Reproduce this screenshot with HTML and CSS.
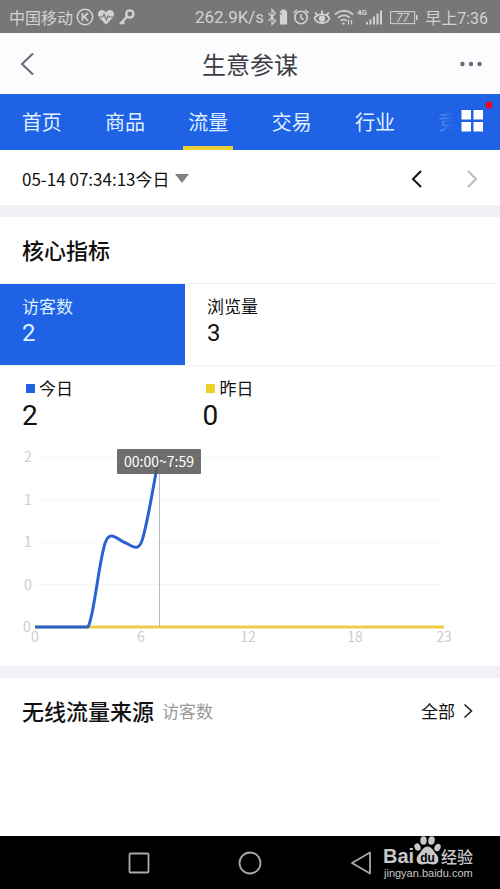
FILE: index.html
```html
<!DOCTYPE html>
<html lang="zh-CN">
<head>
  <meta charset="UTF-8">
  <meta name="viewport" content="width=device-width, initial-scale=1.0">
  <title>生意参谋</title>
  <link rel="stylesheet" href="styles.css">
</head>
<body>
  <!-- 状态栏 -->
  <div class="status">
    <div class="status_left">
      <span class="carrier">中国移动</span>
      <svg width="18" height="18" viewBox="0 0 18 18" fill="none" stroke="#d2d2d2">
        <circle cx="9" cy="9" r="7.7" stroke-width="1.5"/>
        <path d="M6.5 5v8M12 5L7 9.6M8.4 8.6L12.2 13" stroke-width="1.8"/>
      </svg>
      <svg class="heart" width="18" height="18" viewBox="0 0 18 18">
        <path d="M9 16.5L2.2 9.8C-.2 7 1 2.3 4.8 2.1C6.8 2 8.2 3 9 4.4C9.8 3 11.2 2 13.2 2.1C17 2.3 18.2 7 15.8 9.8z" fill="#d2d2d2"/>
        <path d="M1 9h4.5l1.6-2.8L9.3 12l1.8-4.2l1 1.2H17" fill="none" stroke="#777" stroke-width="1.2"/>
      </svg>
      <svg width="18" height="18" viewBox="0 0 18 18" fill="none" stroke="#d2d2d2">
        <circle cx="11.8" cy="6" r="3.6" stroke-width="2.4"/>
        <path d="M9.2 8.7L2 16M3.6 13.2l2.6 2.6" stroke-width="2.4"/>
      </svg>
    </div>
    <div class="status_right">
      <span class="speed">262.9K/s</span>
      <svg width="22" height="18" viewBox="0 0 22 18" fill="none" stroke="#d2d2d2" stroke-width="1.2">
        <path d="M1.5 5l7 8L5 16.5V1.5L8.5 5l-7 8"/>
        <path d="M13.5 3.5h1.5V2h3v1.5h1.5V16h-6z" fill="#d2d2d2"/>
        <path d="M13.2 5.6h1.6" stroke="#777"/>
      </svg>
      <svg width="18" height="18" viewBox="0 0 18 18" fill="none" stroke="#d2d2d2" stroke-width="1.6">
        <circle cx="9" cy="9.5" r="6.2"/>
        <path d="M9 6v4l2.8 1.5M1.5 5L5 2M16.5 5L13 2"/>
      </svg>
      <svg width="18" height="18" viewBox="0 0 18 18" fill="none" stroke="#d2d2d2" stroke-width="1.8">
        <path d="M1.5 10.5C4 5 14 5 16.5 10.5C14 16.500 4 16.500 1.500 10.500z"/>
        <circle cx="9" cy="10.700" r="2.200" fill="#d2d2d2"/>
        <path d="M9 6.200V2.500M4.400 7.200L2.200 4.300M13.600 7.200l2.200-2.900"/>
      </svg>
      <svg width="20" height="18" viewBox="0 0 20 18" fill="none" stroke="#d2d2d2" stroke-width="1.8">
        <path d="M1 6.6C6 1.6 14 1.6 19 6.6M4 9.8C7.4 6.6 12.6 6.6 16 9.8M6.8 12.8C8.6 11.2 11.4 11.2 13 12.8"/>
        <circle cx="9.6" cy="15.6" r="1.2" fill="#d2d2d2" stroke="none"/>
        <path d="M14.5 12v4.5M17.5 12v4.5" stroke-width="1.3"/>
      </svg>
      <svg width="26" height="18" viewBox="0 0 26 18" fill="#d2d2d2">
        <text class="net" x="0" y="7">4G</text>
        <path d="M9 14h2v2.5H9zM12.5 11.5h2v5h-2zM16 8.5h2v8h-2zM19.5 5.5h2v11h-2zM23 2.5h2v14h-2z"/>
      </svg>
      <svg class="battery" width="28" height="18" viewBox="0 0 28 18">
        <rect x=".6" y="3.6" width="24" height="12" fill="none" stroke="#d2d2d2"/>
        <path d="M26 7h1.6v5H26z" fill="#d2d2d2"/>
        <text class="level" x="12.6" y="14" text-anchor="middle">77</text>
      </svg>
      <span class="clock">早上7:36</span>
    </div>
  </div>

  <header class="header">
    <button type="button" aria-label="返回">
      <svg width="24" height="24" viewBox="0 0 24 24" fill="none" stroke="#666a73" stroke-width="2"><path d="M15 1.500L4 12l11 10.500"/></svg>
    </button>
    <h1>生意参谋</h1>
    <button type="button" aria-label="更多">
      <svg width="24" height="6" viewBox="0 0 24 6" fill="#666a73"><circle cx="4.500" cy="3" r="2.200"/><circle cx="13" cy="3" r="2.200"/><circle cx="21.500" cy="3" r="2.200"/></svg>
    </button>
  </header>

  <!-- 导航 -->
  <nav class="tabs">
    <a href="#">首页</a>
    <a href="#">商品</a>
    <a href="#" class="on">流量</a>
    <a href="#">交易</a>
    <a href="#">行业</a>
    <a href="#">竞争</a>
    <button class="tabs_more" type="button" aria-label="全部功能">
      <svg width="32" height="32" viewBox="0 0 32 32">
        <path d="M1.500 9h9.500v9.500H1.500zM13.500 9h9.500v9.500H13.500zM1.500 21h9.500v9.500H1.500zM13.500 21h9.500v9.500H13.500z" fill="#fff"/>
        <circle cx="29" cy="4" r="3.500" fill="#f5021d"/>
      </svg>
    </button>
  </nav>

  <main>
    <!-- 日期 -->
    <section class="date">
      <div class="date_pick">
        <select aria-label="日期">
          <option>05-14 07:34:13今日</option>
        </select>
        <svg width="14" height="9" viewBox="0 0 14 9"><path d="M0 0h14L7 9z" fill="#808080"/></svg>
      </div>
      <div class="date_move">
        <button type="button" aria-label="前一天">
          <svg width="12" height="18" viewBox="0 0 12 18" fill="none" stroke="#111" stroke-width="2"><path d="M10 1L2 9l8 8"/></svg>
        </button>
        <button type="button" aria-label="后一天" disabled>
          <svg width="12" height="18" viewBox="0 0 12 18" fill="none" stroke="#bbb" stroke-width="2"><path d="M2 1l8 8-8 8"/></svg>
        </button>
      </div>
    </section>

    <!-- 核心指标 -->
    <section class="core">
      <h2>核心指标</h2>
      <div class="metrics">
        <button type="button" class="on"><span>访客数</span><b>2</b></button>
        <button type="button"><span>浏览量</span><b>3</b></button>
      </div>
      <div class="legend">
        <div><span class="today">今日</span><b>2</b></div>
        <div><span class="yesterday">昨日</span><b>0</b></div>
      </div>
      <svg class="chart" viewBox="0 0 500 230" role="img" aria-label="访客数">
        <path class="grid" d="M35 21.500H444M35 63.500H444M35 106.500H444M35 148.500H444"/>
        <g class="axis" text-anchor="middle">
          <text x="28" y="26">2</text>
          <text x="28" y="69">1</text>
          <text x="28" y="111">1</text>
          <text x="28" y="154">0</text>
          <text x="27" y="196">0</text>
          <text x="35" y="206">0</text>
          <text x="141" y="206">6</text>
          <text x="248" y="206">12</text>
          <text x="355" y="206">18</text>
          <text x="444" y="206">23</text>
        </g>
        <path class="line_yesterday" d="M35 191H444"/>
        <path class="line_today" d="M35 191H88C94 182 99 123 105.500 106C110 94 117 103 123.500 106C130 108 137 117 141.500 106C147 92 154 45 159 21"/>
        <path class="cursor" d="M159.500 38V191"/>
        <rect class="tip" x="117" y="13" width="84" height="25" rx="1"/>
        <text class="tip_text" x="159" y="31" text-anchor="middle">00:00~7:59</text>
      </svg>
    </section>

    <!-- 流量来源 -->
    <section class="source">
      <h2>无线流量来源</h2>
      <span>访客数</span>
      <a href="#">全部
        <svg width="10" height="16" viewBox="0 0 10 16" fill="none" stroke="#222" stroke-width="1.600"><path d="M1.500 1.500L8.500 8l-7 6.500"/></svg>
      </a>
    </section>
  </main>

  <!-- 系统按键 -->
  <footer class="sysnav">
    <button type="button" aria-label="最近任务">
      <svg width="22" height="24" viewBox="0 0 22 24" fill="none" stroke="#aaa" stroke-width="1.800"><rect x="1.500" y="2.500" width="19" height="19" rx="1"/></svg>
    </button>
    <button type="button" aria-label="主页">
      <svg width="24" height="24" viewBox="0 0 24 24" fill="none" stroke="#aaa" stroke-width="1.800"><circle cx="12" cy="12" r="10.500"/></svg>
    </button>
    <button type="button" aria-label="后退">
      <svg width="22" height="24" viewBox="0 0 22 24" fill="none" stroke="#aaa" stroke-width="1.800" stroke-linejoin="round"><path d="M20 1.500v21L2 12z"/></svg>
    </button>
    <svg class="mark" width="92" height="53" viewBox="0 0 92 53" fill="#c8c8c8">
      <text class="mark_bai" x="0" y="27">Bai</text>
      <ellipse cx="34.500" cy="11" rx="3" ry="3.800" transform="rotate(-20 34.500 11)"/>
      <ellipse cx="40.500" cy="4.500" rx="3.200" ry="4.300"/>
      <ellipse cx="48.500" cy="4.500" rx="3.200" ry="4.300" transform="rotate(10 48.500 4.500)"/>
      <ellipse cx="54.500" cy="11.500" rx="3" ry="3.800" transform="rotate(25 54.500 11.500)"/>
      <path d="M44.500 10.500C40.500 10.500 39 14.500 36 18C32 22 33 28.500 39 28.500C42 28.500 42 27.500 44.500 27.500C47 27.500 47 28.500 50 28.500C56 28.500 57 22 53 18C50 14.500 48.500 10.500 44.500 10.500z"/>
      <text class="mark_du" x="44.500" y="26" text-anchor="middle">du</text>
      <text class="mark_cn" x="58" y="27">经验</text>
      <text class="mark_url" x="1" y="41">jingyan.baidu.com</text>
    </svg>
  </footer>
</body>
</html>
```
FILE: styles.css
```css
*{box-sizing: border-box;}
body{
  margin: 0;
  min-height: 100vh;
  display: flex;
  flex-direction: column;
  background-color: #fff;
  color: #111;
  font-family: "Noto Sans CJK SC", sans-serif;
  font-size: 17px;
}
h1, h2{margin: 0;}
svg{display: block;flex: none;}
a{color: inherit;text-decoration: none;}
button{
  margin: 0;padding: 0;
  border: 0;
  background: none;
  color: inherit;
  font: inherit;
  text-align: left;
}
b{
  display: block;
  font-family: Roboto, sans-serif;
  font-weight: 400;
}

/* 状态栏 */
.status{
  height: 33px;
  padding: 0 12px 0 9px;
  display: flex;
  justify-content: space-between;
  align-items: center;
  background-color: #777;
  color: #d2d2d2;
  font-family: Roboto, "Noto Sans CJK SC", sans-serif;
  font-size: 16px;
  white-space: nowrap;
}
.status_left, .status_right{
  display: flex;
  align-items: center;
  gap: 3px;
}
.speed{font-size: 17px;}
.battery{margin: 0 4px;}
.net{font: bold 8px Roboto, sans-serif;}
.level{
  fill: #d2d2d2;
  font: italic 12px Roboto, sans-serif;
}

/* 标题 */
.header{
  height: 61px;
  padding: 0 18px;
  display: flex;
  justify-content: space-between;
  align-items: center;
  background-color: #fcfcfe;
  color: #3c3d42;
}
.header h1{
  font-size: 24px;
  font-weight: 400;
}

/* 导航 */
.tabs{
  position: relative;
  height: 56px;
  display: flex;
  background-color: #2062e6;
  color: #dff0ff;
  font-size: 20px;
  line-height: 56px;
}
.tabs a{
  flex: 1;
  display: flex;
  justify-content: center;
}
.tabs .on{
  background: linear-gradient(#edcf3c, #edcf3c) center bottom / 50px 4px no-repeat;
}
.tabs_more{
  position: absolute;
  top: 0;right: 0;
  width: 64px;height: 56px;
  padding: 7px 0 0 24px;
  display: flex;
  align-items: flex-start;
  background: linear-gradient(to right, rgba(32, 98, 230, .6), #2062e6 18px);
}

/* 日期 */
.date{
  height: 55px;
  padding: 2px 22px 0;
  display: flex;
  justify-content: space-between;
  align-items: center;
}
.date_pick{
  display: flex;
  align-items: center;
  gap: 5px;
}
.date_pick select{
  appearance: none;
  margin: 0;padding: 0;
  border: 0;
  background: none;
  color: #111;
  font: inherit;
}
.date_move{
  display: flex;
  gap: 43px;
}

/* 核心指标 */
.core{border-top: 12px solid #eff1f5;}
.core h2{
  padding: 0 22px 2px;
  border-bottom: 1px solid #f1f2f5;
  font-size: 22px;
  font-weight: 500;
  line-height: 64px;
}
.metrics{
  display: grid;
  grid-template-columns: 37% 1fr;
  border-bottom: 1px solid #f1f2f5;
}
.metrics button{padding: 10px 22px 17px;}
.metrics span{
  display: block;
  line-height: 24px;
}
.metrics b{
  font-size: 24px;
  line-height: 30px;
}
.metrics .on{
  background-color: #2062e6;
  color: #dff0ff;
}

.legend{
  padding: 10px 27px 4px 22px;
  display: grid;
  grid-template-columns: 40% 1fr;
}
.legend span{
  padding-left: 4px;
  display: flex;
  align-items: center;
  gap: 4px;
  line-height: 24px;
}
.legend span::before{
  content: "";
  width: 9px;height: 9px;
  background-color: #2062e6;
}
.legend .yesterday::before{background-color: #edcf2c;}
.legend b{
  font-size: 28px;
  line-height: 32px;
}

/* 折线图 */
.chart{width: 100%;}
.grid{stroke: #f5f5f5;}
.axis{
  fill: #ccc;
  font-size: 14px;
}
.line_today, .line_yesterday{
  fill: none;
  stroke: #2b62d2;
  stroke-width: 3;
  stroke-linejoin: round;
}
.line_yesterday{stroke: #efcb47;}
.cursor{stroke: #bbb;}
.tip{fill: rgba(90, 90, 90, .88);}
.tip_text{
  fill: #fff;
  font-size: 14px;
}

/* 流量来源 */
.source{
  padding: 0 27px 0 22px;
  display: flex;
  align-items: center;
  gap: 8px;
  border-top: 12px solid #f0f0f5;
  line-height: 66px;
}
.source h2{
  font-size: 22px;
  font-weight: 500;
  line-height: 64px;
  padding-bottom: 2px;
}
.source span{color: #999;}
.source a{
  margin-left: auto;
  display: flex;
  align-items: center;
  gap: 8px;
}

/* 系统按键 */
.sysnav{
  position: relative;
  height: 53px;
  margin-top: auto;
  display: flex;
  justify-content: center;
  align-items: center;
  gap: 88px;
  background-color: #000;
}
.mark{
  position: absolute;
  top: 0;right: 25px;
}
.mark_bai{font: bold 20px "Liberation Sans", sans-serif;}
.mark_du{
  fill: #000;
  font: bold 12px "Liberation Sans", sans-serif;
}
.mark_cn{
  font-size: 16px;
  font-weight: 500;
}
.mark_url{font: 11px "Liberation Sans", sans-serif;}
```
